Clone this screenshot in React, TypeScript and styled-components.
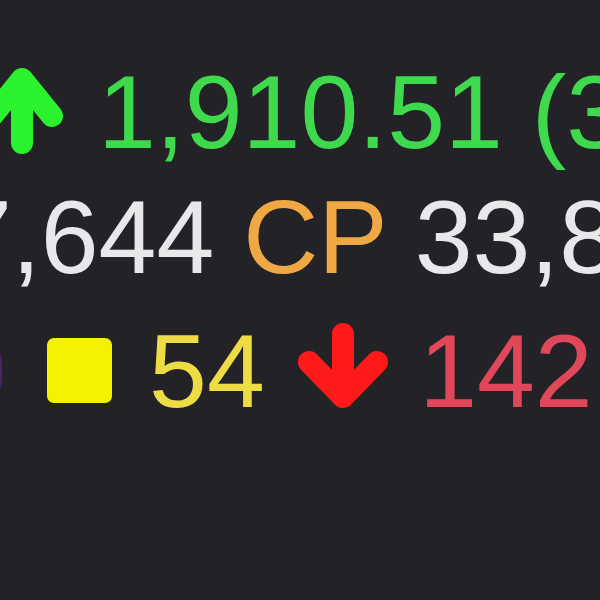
import React from "react";
import styled, { createGlobalStyle } from "styled-components";

const Global = createGlobalStyle`
  html, body {
    margin: 0;
    padding: 0;
    background: #232327;
    overflow: hidden;
  }
  body {
    width: 600px;
    height: 600px;
  }
`;

const Board = styled.div`
  width: 600px;
  height: 600px;
  box-sizing: border-box;
  padding-top: 50px;
  overflow: hidden;
  background: #232327;
  font-family: "Liberation Sans", Arial, sans-serif;
  font-size: 104px;
`;

const Row = styled.div<{ $offset: number; $gap?: number }>`
  line-height: 125px;
  height: 125px;
  white-space: nowrap;
  margin-left: ${(p) => p.$offset}px;
  margin-top: ${(p) => p.$gap ?? 0}px;
`;

const Val = styled.span<{ $color: string }>`
  color: ${(p) => p.$color};
`;

const Arrow = styled.svg<{ $after: number; $before?: number; $drop: number }>`
  display: inline-block;
  vertical-align: ${(p) => p.$drop}px;
  margin-left: ${(p) => p.$before ?? 0}px;
  margin-right: ${(p) => p.$after}px;
  overflow: visible;
`;

const Square = styled.span<{ $color: string }>`
  display: inline-block;
  width: 65px;
  height: 65px;
  border-radius: 7px;
  background: ${(p) => p.$color};
  vertical-align: 4px;
  margin-left: 40.6px;
  margin-right: 37px;
`;

const UpArrow = () => (
  <Arrow width={86} height={88} viewBox="0 0 86 88" $after={33} $drop={-6}>
    <g fill="none" stroke="#2af22e" strokeWidth={22} strokeLinecap="round" strokeLinejoin="round">
      <path d="M43 77V14" />
      <path d="M13 50L43 13L73 50" />
    </g>
  </Arrow>
);

const DownArrow = () => (
  <Arrow width={92} height={90} viewBox="0 0 92 90" $before={32.4} $after={30} $drop={-4}>
    <g fill="none" stroke="#ff1a1a" strokeWidth={22} strokeLinecap="round" strokeLinejoin="round">
      <path d="M46 13V75" />
      <path d="M12 41L46 76L80 41" />
    </g>
  </Arrow>
);

export default function App() {
  return (
    <>
      <Global />
      <Board>
        <Row $offset={-21}>
          <UpArrow />
          <Val $color="#3fd94d">1,910.51 (3.18%)</Val>
        </Row>
        <Row $offset={-46}>
          <Val $color="#e8e8ea">7,644 </Val>
          <Val $color="#f0a845">CP</Val>
          <Val $color="#e8e8ea"> 33,844</Val>
        </Row>
        <Row $offset={-51.4} $gap={9}>
          <Val $color="#4a2466">0</Val>
          <Square $color="#f4f200" />
          <Val $color="#eedc45">54</Val>
          <DownArrow />
          <Val $color="#e0485a">142</Val>
        </Row>
      </Board>
    </>
  );
}
